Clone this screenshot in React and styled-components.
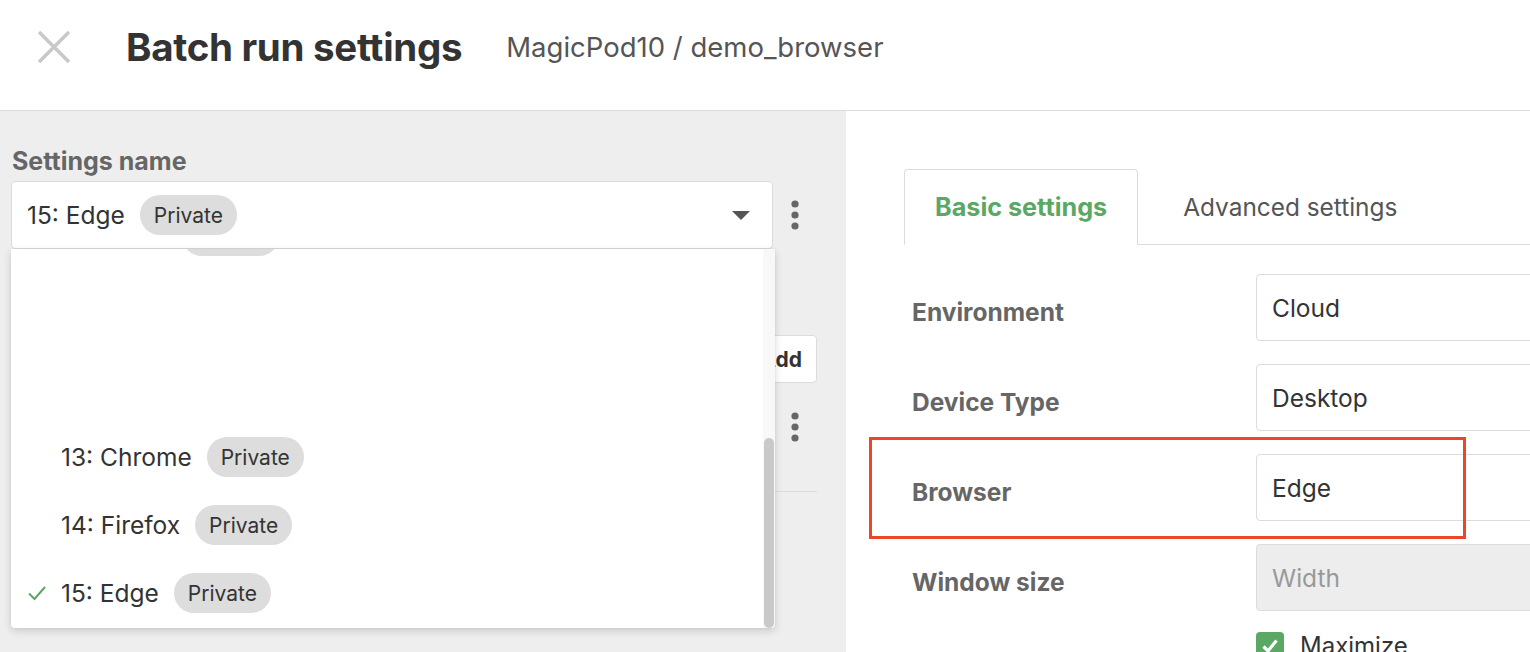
import React, { useLayoutEffect, useRef } from "react";
import styled, { createGlobalStyle } from "styled-components";

const GlobalStyle = createGlobalStyle`
  html, body {
    margin: 0;
    padding: 0;
    overflow: hidden;
    background: #fff;
  }
  body {
    font-family: Inter, "Liberation Sans", Arial, sans-serif;
    color: #333;
  }
  * { box-sizing: border-box; }
`;

const topItems = ["8: Safari", "9: Chrome", "10: Firefox", "11: Edge"];
const menuItems = [
  { id: 13, name: "13: Chrome" },
  { id: 14, name: "14: Firefox" },
  { id: 15, name: "15: Edge", selected: true },
];

const formRows = [
  { label: "Environment", value: "Cloud" },
  { label: "Device Type", value: "Desktop" },
  { label: "Browser", value: "Edge", marked: true },
  { label: "Window size", value: "Width", disabled: true },
];

function Kebab() {
  return (
    <KebabButton>
      <svg width="8" height="30" viewBox="0 0 8 30">
        <circle cx="4" cy="4" r="3.6" fill="#666" />
        <circle cx="4" cy="15" r="3.6" fill="#666" />
        <circle cx="4" cy="26" r="3.6" fill="#666" />
      </svg>
    </KebabButton>
  );
}

export default function App() {
  const listRef = useRef(null);

  // dropdown list is scrolled all the way down
  useLayoutEffect(() => {
    if (listRef.current) listRef.current.scrollTop = listRef.current.scrollHeight;
  }, []);

  return (
    <Page>
      <GlobalStyle />
      <Header>
        <CloseIcon>
          <svg width="34" height="34" viewBox="0 0 34 34">
            <path d="M2 2 L32 32 M32 2 L2 32" stroke="#c8c8c8" strokeWidth="3.4" />
          </svg>
        </CloseIcon>
        <Title>Batch run settings</Title>
        <Breadcrumb>MagicPod10 / demo_browser</Breadcrumb>
      </Header>

      <Body>
        <LeftPanel>
          <FieldLabel>Settings name</FieldLabel>
          <SelectRow>
            <SelectWrap>
              <SelectBox>
                <ItemText>15: Edge</ItemText>
                <Pill>Private</Pill>
                <Caret />
              </SelectBox>
              <Menu>
                <MenuList ref={listRef}>
                  <MenuInner>
                    {topItems.map((name) => (
                      <MenuItem key={name}>
                        <Check />
                        <ItemText>{name}</ItemText>
                        <Pill>Private</Pill>
                      </MenuItem>
                    ))}
                    <MenuItem>
                      <Check />
                      <ItemText>12: Safari</ItemText>
                      <Pill>Private</Pill>
                    </MenuItem>
                    <MenuGap />
                    {menuItems.map((it) => (
                      <MenuItem key={it.id}>
                        <Check $on={it.selected}>
                          <svg width="20" height="16" viewBox="0 0 20 16">
                            <path d="M2 8.5 L7.5 14 L18 2" fill="none" stroke="#5aa864" strokeWidth="2" />
                          </svg>
                        </Check>
                        <ItemText>{it.name}</ItemText>
                        <Pill>Private</Pill>
                      </MenuItem>
                    ))}
                  </MenuInner>
                </MenuList>
                <ScrollTrack>
                  <ScrollThumb />
                </ScrollTrack>
              </Menu>
            </SelectWrap>
            <Kebab />
          </SelectRow>

          <AddRow>
            <AddButton>Add</AddButton>
          </AddRow>
          <ListRow>
            <ItemText>Test cases</ItemText>
            <Kebab />
          </ListRow>
          <Divider />
        </LeftPanel>

        <RightPanel>
          <Tabs>
            <Tab $active>Basic settings</Tab>
            <Tab>Advanced settings</Tab>
          </Tabs>
          <Form>
            {formRows.map((r) => (
              <FormRow key={r.label}>
                <RowLabel>{r.label}</RowLabel>
                <Input $disabled={r.disabled}>{r.value}</Input>
                {r.marked && <Marker />}
              </FormRow>
            ))}
            <CheckRow>
              <CheckBox>
                <svg width="18" height="16" viewBox="0 0 18 16">
                  <path d="M2.5 8.5 L7 13 L15.5 2.5" fill="none" stroke="#fff" strokeWidth="3.2" />
                </svg>
              </CheckBox>
              <CheckLabel>Maximize</CheckLabel>
            </CheckRow>
          </Form>
        </RightPanel>
      </Body>
    </Page>
  );
}

const Page = styled.div`
  width: 1530px;
  height: 652px;
  overflow: hidden;
  display: flex;
  flex-direction: column;
`;

const Header = styled.header`
  height: 111px;
  flex-shrink: 0;
  display: flex;
  align-items: center;
  border-bottom: 1px solid #dcdcdc;
  padding: 0 0 16px 37px;
`;

const CloseIcon = styled.div`
  width: 34px;
  height: 34px;
  display: flex;
  margin-right: 55px;
`;

const Title = styled.h1`
  margin: 0 44px 0 0;
  font-size: 38.5px;
  font-weight: 700;
  color: #333;
  letter-spacing: -0.3px;
`;

const Breadcrumb = styled.span`
  font-size: 27.5px;
  color: #555;
`;

const Body = styled.div`
  flex: 1;
  display: flex;
  min-height: 0;
`;

const LeftPanel = styled.section`
  width: 846px;
  flex-shrink: 0;
  background: #eeeeee;
  padding: 35px 29px 0 11px;
`;

const FieldLabel = styled.div`
  font-size: 25px;
  font-weight: 700;
  color: #666;
  padding-left: 1px;
  margin-bottom: 5px;
`;

const SelectRow = styled.div`
  display: flex;
  align-items: center;
`;

const SelectWrap = styled.div`
  position: relative;
  flex: 1;
`;

const SelectBox = styled.div`
  height: 68px;
  background: #fff;
  border: 1px solid #dcdcdc;
  border-radius: 4px;
  display: flex;
  align-items: center;
  padding: 0 22px 0 15px;
`;

const ItemText = styled.span`
  font-size: 24.5px;
  color: #333;
  margin-right: 15px;
  white-space: nowrap;
`;

const Pill = styled.span`
  height: 40px;
  display: inline-flex;
  align-items: center;
  padding: 0 14px;
  border-radius: 20px;
  background: #dddddd;
  font-size: 21px;
  color: #333;
`;

const Caret = styled.span`
  margin-left: auto;
  width: 0;
  height: 0;
  border-left: 9px solid transparent;
  border-right: 9px solid transparent;
  border-top: 9px solid #555;
`;

const Menu = styled.div`
  position: absolute;
  top: 68px;
  left: 0;
  right: -2px;
  height: 379px;
  display: flex;
  background: #fff;
  border-radius: 0 0 4px 4px;
  box-shadow: 0 3px 8px rgba(0, 0, 0, 0.15), 0 0 2px rgba(0, 0, 0, 0.08);
  overflow: hidden;
  z-index: 5;
`;

const MenuList = styled.div`
  flex: 1;
  overflow: hidden;
`;

const ScrollTrack = styled.div`
  width: 12px;
  flex-shrink: 0;
  background: #f8f8f8;
  display: flex;
  flex-direction: column;
  justify-content: flex-end;
  padding: 0 1px 0 1px;
`;

const ScrollThumb = styled.div`
  height: 190px;
  border-radius: 5px;
  background: #c9c9c9;
`;

const MenuInner = styled.div`
  padding: 60px 0 1px;
`;

const MenuItem = styled.div`
  height: 68px;
  display: flex;
  align-items: center;
  padding-left: 16px;
`;

const MenuGap = styled.div`
  height: 153px;
`;

const Check = styled.span`
  width: 34px;
  display: flex;
  visibility: ${(p) => (p.$on ? "visible" : "hidden")};
`;

const KebabButton = styled.div`
  width: 44px;
  display: flex;
  justify-content: center;
  align-items: center;
`;

const AddRow = styled.div`
  display: flex;
  justify-content: flex-end;
  margin-top: 86px;
`;

const AddButton = styled.button`
  height: 48px;
  padding: 0 14px;
  background: #fff;
  border: 1px solid #dcdcdc;
  border-radius: 4px;
  font-family: inherit;
  font-size: 21px;
  font-weight: 700;
  color: #333;
`;

const ListRow = styled.div`
  display: flex;
  align-items: center;
  justify-content: space-between;
  height: 66px;
  margin-top: 11px;
`;

const Divider = styled.div`
  height: 1px;
  background: #dcdcdc;
  margin-top: 31px;
`;

const RightPanel = styled.section`
  flex: 1;
  background: #fff;
  padding: 58px 0 0 58px;
`;

const Tabs = styled.div`
  display: flex;
  gap: 14px;
  width: 820px;
  border-bottom: 1px solid #dcdcdc;
`;

const Tab = styled.div`
  height: 76px;
  padding: 0 30px;
  margin-bottom: -1px;
  display: flex;
  align-items: center;
  font-size: ${(p) => (p.$active ? "25.2px" : "24.4px")};
  font-weight: ${(p) => (p.$active ? 700 : 400)};
  color: ${(p) => (p.$active ? "#5aa864" : "#555")};
  background: ${(p) => (p.$active ? "#fff" : "transparent")};
  border: 1px solid ${(p) => (p.$active ? "#dcdcdc" : "transparent")};
  border-bottom-color: ${(p) => (p.$active ? "#fff" : "transparent")};
  border-radius: 4px 4px 0 0;
`;

const Form = styled.div`
  width: 820px;
  padding: 29px 0 0 8px;
  display: flex;
  flex-direction: column;
  gap: 23px;
`;

const FormRow = styled.div`
  position: relative;
  display: flex;
  align-items: center;
`;

const RowLabel = styled.div`
  width: 344px;
  flex-shrink: 0;
  padding-top: 8px;
  font-size: 24.5px;
  font-weight: 700;
  color: #666;
`;

const Input = styled.div`
  flex: 1;
  height: 67px;
  display: flex;
  align-items: center;
  padding: 0 15px;
  border: 1px solid #dcdcdc;
  border-radius: 4px;
  font-size: 24.5px;
  color: ${(p) => (p.$disabled ? "#999" : "#333")};
  background: ${(p) => (p.$disabled ? "#ededed" : "#fff")};
`;

const Marker = styled.div`
  position: absolute;
  top: -17px;
  left: -43px;
  width: 597px;
  height: 102px;
  border: 3px solid #ec4527;
  pointer-events: none;
`;

const CheckRow = styled.div`
  display: flex;
  align-items: center;
  padding-left: 344px;
  margin-top: -3px;
`;

const CheckBox = styled.span`
  width: 28px;
  height: 28px;
  border-radius: 4px;
  background: #5aa864;
  display: flex;
  align-items: center;
  justify-content: center;
  margin-right: 16px;
`;

const CheckLabel = styled.span`
  font-size: 24px;
  color: #333;
`;
